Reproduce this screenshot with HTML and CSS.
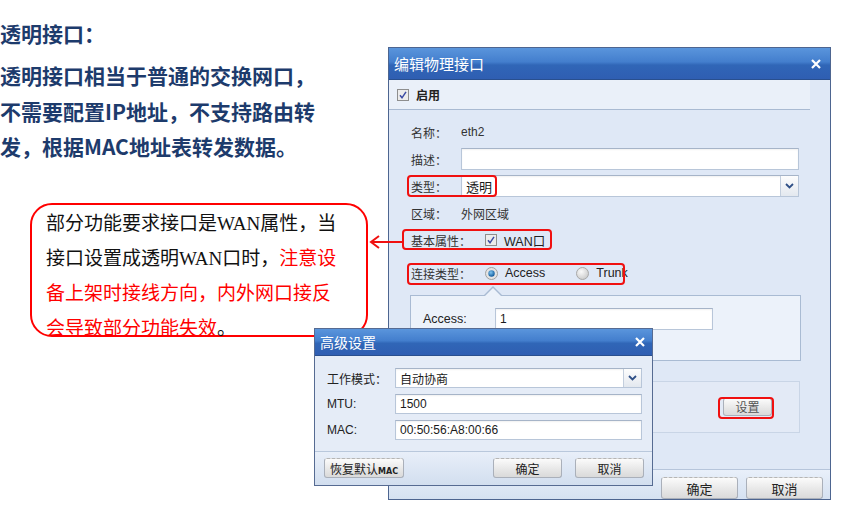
FILE: index.html
```html
<!DOCTYPE html>
<html lang="zh-CN">
<head>
    <meta charset="UTF-8">
    <meta name="viewport" content="width=device-width, initial-scale=1.0">
    <title>透明接口</title>
    <link rel="stylesheet" href="styles.css">
</head>
<body>

<div class="slide">
    <div class="intro">
        <h2>透明接口：</h2>
        <p>透明接口相当于普通的交换网口，<br>不需要配置IP地址，不支持路由转<br>发，根据MAC地址表转发数据。</p>
    </div>

    <div class="note">
        部分功能要求接口是WAN属性，当<br>接口设置成透明WAN口时，<span class="warn">注意设<br>备上架时接线方向，内外网口接反<br>会导致部分功能失效</span>。
    </div>

    <!-- 编辑物理接口 -->
    <div class="win win-main">
        <div class="win-title">
            <span>编辑物理接口</span>
            <svg class="close" width="10" height="10" viewBox="0 0 10 10"><path d="M1 1L9 9M9 1L1 9" stroke="#fff" stroke-width="2.2"/></svg>
        </div>

        <div class="enable-bar">
            <svg class="chk" width="12" height="12" viewBox="0 0 12 12"><rect x=".5" y=".5" width="11" height="11" fill="#ececec" stroke="#8e8e8e"/><path d="M3 6.2l2 2.6 4-6" fill="none" stroke="#3a4aa3" stroke-width="1.5"/></svg>
            <b>启用</b>
        </div>

        <div class="form">
            <div class="row">
                <label>名称：</label>
                <span>eth2</span>
            </div>
            <div class="row">
                <label>描述：</label>
                <div class="field"></div>
            </div>
            <div class="row">
                <label>类型：</label>
                <div class="field select">
                    <span class="val big">透明</span>
                    <span class="drop"><svg width="9" height="6" viewBox="0 0 9 6"><path d="M1 1l3.5 3.5L8 1" stroke="#2f4f86" stroke-width="1.8" fill="none"/></svg></span>
                </div>
            </div>
            <div class="row">
                <label>区域：</label>
                <span>外网区域</span>
            </div>
            <div class="row">
                <label class="wide">基本属性：</label>
                <svg class="chk" width="12" height="12" viewBox="0 0 12 12"><rect x=".5" y=".5" width="11" height="11" fill="#ececec" stroke="#8e8e8e"/><path d="M3 6.2l2 2.6 4-6" fill="none" stroke="#3a4aa3" stroke-width="1.5"/></svg>
                <span class="opt">WAN口</span>
            </div>
            <div class="row row-link">
                <label class="wide">连接类型：</label>
                <svg class="radio" width="13" height="13" viewBox="0 0 13 13">
                    <defs><radialGradient id="dot" cx="40%" cy="35%" r="65%"><stop offset="0" stop-color="#7fc4f0"/><stop offset="1" stop-color="#0f5a9c"/></radialGradient></defs>
                    <circle cx="6.5" cy="6.5" r="6" fill="#e4e4e4" stroke="#a0a0a0"/><circle cx="6.5" cy="6.5" r="3.2" fill="url(#dot)"/>
                </svg>
                <span class="opt">Access</span>
                <svg class="radio trunk" width="13" height="13" viewBox="0 0 13 13">
                    <defs><radialGradient id="off" cx="40%" cy="35%" r="70%"><stop offset="0" stop-color="#fafafa"/><stop offset="1" stop-color="#c9c9c9"/></radialGradient></defs>
                    <circle cx="6.5" cy="6.5" r="6" fill="url(#off)" stroke="#a8a8a8"/>
                </svg>
                <span class="opt">Trunk</span>
            </div>

            <div class="panel panel-access">
                <label>Access:</label>
                <div class="field short"><span class="val">1</span></div>
            </div>

            <div class="panel panel-set">
                <button class="btn btn-set">设置</button>
            </div>
        </div>

        <div class="win-foot">
            <button class="btn btn-main">确定</button>
            <button class="btn btn-main">取消</button>
        </div>

        <div class="mark mark-type"></div>
        <div class="mark mark-wan"></div>
        <div class="mark mark-link"></div>
        <div class="mark mark-set"></div>
    </div>

    <svg class="arrow" width="36" height="14" viewBox="0 0 36 14"><path d="M3 7H36M11 1L3 7L11 13" fill="none" stroke="#f01010" stroke-width="2"/></svg>

    <!-- 高级设置 -->
    <div class="win win-adv">
        <div class="win-title small">
            <span>高级设置</span>
            <svg class="close" width="10" height="10" viewBox="0 0 10 10"><path d="M1 1L9 9M9 1L1 9" stroke="#fff" stroke-width="2.2"/></svg>
        </div>
        <div class="adv-body">
            <div class="adv-row">
                <label>工作模式：</label>
                <div class="field select">
                    <span class="val">自动协商</span>
                    <span class="drop"><svg width="9" height="6" viewBox="0 0 9 6"><path d="M1 1l3.5 3.5L8 1" stroke="#2f4f86" stroke-width="1.8" fill="none"/></svg></span>
                </div>
            </div>
            <div class="adv-row">
                <label>MTU:</label>
                <div class="field"><span class="val">1500</span></div>
            </div>
            <div class="adv-row">
                <label>MAC:</label>
                <div class="field"><span class="val">00:50:56:A8:00:66</span></div>
            </div>
        </div>
        <div class="win-foot adv-foot">
            <button class="btn btn-reset">恢复默认<small>MAC</small></button>
            <button class="btn btn-adv">确定</button>
            <button class="btn btn-adv">取消</button>
        </div>
    </div>
</div>

</body>
</html>
```

FILE: styles.css
```css
* {
    box-sizing: border-box;
}
body {
    margin: 0;
    background: #fff;
    font-family: "Noto Sans CJK SC", sans-serif;
}
.slide {
    position: relative;
    width: 846px;
    height: 512px;
    overflow: hidden;
}

/* 左侧说明文字 */
.intro {
    padding-top: 15px;
    color: #1d3b6c;
    font-weight: bold;
    font-size: 21px;
}
.intro h2 {
    margin: 0;
    font-size: 21px;
    line-height: 36px;
}
.intro p {
    margin: 7px 0 0;
    line-height: 35.5px;
}

.note {
    position: absolute;
    left: 30px;
    top: 203px;
    width: 338px;
    height: 134px;
    border: 2px solid #f00;
    border-radius: 22px;
    padding: 1px 0 0 14px;
    font-family: "Liberation Serif", "Noto Sans CJK SC", serif;
    font-size: 19px;
    line-height: 35px;
    color: #111;
    background: #fff;
}
.warn {
    color: #f00;
}

.arrow {
    position: absolute;
    left: 368px;
    top: 235px;
}

/* 窗口 */
.win {
    position: absolute;
    display: flex;
    flex-direction: column;
    border: 1px solid #4d6590;
    background: #dfe8f6;
    font-family: "Liberation Sans", "Noto Sans CJK SC", sans-serif;
    font-size: 12px;
    color: #333;
}
.win-main {
    left: 388px;
    top: 47px;
    width: 443px;
    height: 453px;
}
.win-adv {
    left: 314px;
    top: 328px;
    width: 339px;
    height: 158px;
    background: #e5ecf7;
    border-color: #566b92;
}
.win-title {
    height: 32px;
    flex-shrink: 0;
    display: flex;
    align-items: center;
    justify-content: space-between;
    padding: 0 9px 0 5px;
    background: linear-gradient(#5a95dc, #437ecd 45%, #3066b7 55%, #2f5eb2);
    border-bottom: 1px solid #294f8e;
    color: #fff;
    font-size: 15px;
}
.win-title.small {
    height: 27px;
    font-size: 14px;
    padding-right: 7px;
}

.enable-bar {
    height: 30px;
    margin-right: 20px;
    display: flex;
    align-items: center;
    gap: 7px;
    padding-left: 8px;
    background: #eaf0f9;
    border-bottom: 1px solid #a9bad2;
    color: #222;
}

.form {
    padding: 11px 0 0 22px;
}
.row {
    height: 22px;
    display: flex;
    align-items: center;
    margin-bottom: 5px;
}
.row label {
    width: 50px;
    flex-shrink: 0;
}
.row label.wide {
    width: 74px;
}
.row-link {
    margin-top: 11px;
}
.opt {
    margin-left: 7px;
    font-size: 12.5px;
    color: #222;
}
.trunk {
    margin-left: 31px;
}

.field {
    width: 338px;
    height: 22px;
    display: flex;
    align-items: center;
    background: #fff;
    border: 1px solid #b8c6d9;
    border-top-color: #a6b4c8;
    box-shadow: inset 0 1px 2px rgba(0, 0, 0, 0.06);
}
.val {
    flex: 1;
    padding-left: 4px;
    color: #1a1a1a;
}
.val.big {
    font-size: 13px;
}
.drop {
    width: 18px;
    height: 100%;
    display: flex;
    align-items: center;
    justify-content: center;
    border-left: 1px solid #c3cedd;
    background: linear-gradient(#fdfdfd, #e3e8ef);
}

.panel {
    margin-left: -1px;
    width: 391px;
    border: 1px solid #a9bbd3;
    background: #ecf2fa;
}
.panel-access {
    position: relative;
    margin-top: 11px;
    height: 66px;
    display: flex;
    align-items: flex-start;
    padding: 12px 0 0 12px;
}
.panel-access::before,
.panel-access::after {
    content: "";
    position: absolute;
    left: 72px;
    top: -10px;
    border: 10px solid transparent;
    border-top: 0;
    border-bottom-color: #a9bbd3;
}
.panel-access::after {
    top: -8px;
    left: 73px;
    border-width: 0 9px 9px;
    border-bottom-color: #ecf2fa;
}
.panel-access label {
    width: 72px;
    line-height: 22px;
    font-size: 12.5px;
    color: #222;
}
.field.short {
    width: 218px;
}
.panel-set {
    margin-top: 20px;
    width: 390px;
    height: 52px;
    display: flex;
    align-items: center;
    justify-content: flex-end;
    padding-right: 27px;
    background: #e3eaf6;
    border-color: #c9d5e6;
}

.btn {
    font-family: "Noto Sans CJK SC", sans-serif;
    font-size: 13px;
    color: #222;
    padding: 0;
    background: linear-gradient(#fbfbfb, #e6e6e6 60%, #dadada);
    border: 1px solid #aab0ba;
    border-top: 1px dashed #b5b5b5;
    border-radius: 3px;
    cursor: pointer;
}
.btn-set {
    width: 49px;
    height: 18px;
    font-size: 12px;
    line-height: 16px;
    color: #555;
}
.btn-main {
    width: 77px;
    height: 22px;
}
.btn-adv {
    width: 69px;
    height: 20px;
    font-size: 12px;
}
.btn-reset {
    width: 80px;
    height: 20px;
    font-size: 12px;
    margin-right: auto;
}
.btn-reset small {
    font-family: "DejaVu Sans", sans-serif;
    font-size: 8px;
    font-weight: bold;
}

.win-foot {
    margin-top: auto;
    height: 30px;
    display: flex;
    justify-content: flex-end;
    align-items: flex-start;
    gap: 8px;
    padding: 7px 7px 0 0;
    background: linear-gradient(#e9f0fa, #d5e1f1);
    border-top: 1px solid #b6c5db;
}

/* 高级设置 */
.adv-body {
    padding: 12px 0 0 12px;
}
.adv-row {
    display: flex;
    align-items: center;
    height: 20px;
    margin-bottom: 6px;
}
.adv-row label {
    width: 68px;
    color: #222;
}
.adv-row .field {
    width: 247px;
    height: 20px;
}
.adv-foot {
    height: 34px;
    gap: 13px;
    padding: 6px 8px 0 9px;
    background: linear-gradient(#e8eff9, #d2deef);
    border-top-color: #b9c8dc;
}

/* 红色标注框 */
.mark {
    position: absolute;
    border: 2px solid #f01010;
    border-radius: 4px;
}
.mark-type {
    left: 18px;
    top: 127px;
    width: 90px;
    height: 22px;
}
.mark-wan {
    left: 13px;
    top: 181px;
    width: 150px;
    height: 21px;
}
.mark-link {
    left: 18px;
    top: 215px;
    width: 218px;
    height: 22px;
}
.mark-set {
    left: 329px;
    top: 349px;
    width: 56px;
    height: 22px;
}
```
